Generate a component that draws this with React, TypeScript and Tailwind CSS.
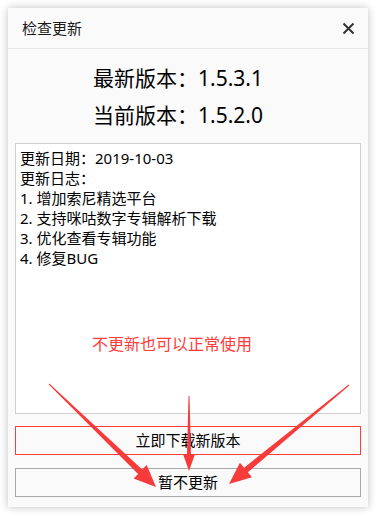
import React from "react";

function arrowPoints(tx: number, ty: number, hx: number, hy: number, headLen: number, headW: number, shaftW: number) {
  const dx = hx - tx;
  const dy = hy - ty;
  const len = Math.hypot(dx, dy);
  const ux = dx / len;
  const uy = dy / len;
  const nx = -uy;
  const ny = ux;
  const bx = hx - ux * headLen;
  const by = hy - uy * headLen;
  const pts: [number, number][] = [
    [tx + nx * 0.5, ty + ny * 0.5],
    [bx + nx * (shaftW / 2), by + ny * (shaftW / 2)],
    [bx + nx * (headW / 2), by + ny * (headW / 2)],
    [hx, hy],
    [bx - nx * (headW / 2), by - ny * (headW / 2)],
    [bx - nx * (shaftW / 2), by - ny * (shaftW / 2)],
    [tx - nx * 0.5, ty - ny * 0.5],
  ];
  return pts.map((p) => `${p[0].toFixed(1)},${p[1].toFixed(1)}`).join(" ");
}

const font = { fontFamily: '"Noto Sans", "Noto Sans CJK SC", sans-serif' };

export default function App() {
  const lines = [
    "更新日期：2019-10-03",
    "更新日志：",
    "1. 增加索尼精选平台",
    "2. 支持咪咕数字专辑解析下载",
    "3. 优化查看专辑功能",
    "4. 修复BUG",
  ];
  return (
    <div className="relative w-[376px] h-[516px] bg-white pt-2 pl-2" style={font}>
      <div className="w-[360px] h-[499px] bg-[#fafafa] shadow-[0_0_8px_rgba(0,0,0,0.25)] flex flex-col">
        <div className="h-[41px] flex items-center justify-between border-b border-[#e8e8e8] pl-[14px] pr-[13px]">
          <span className="text-[15px] text-[#1a1a1a]">检查更新</span>
          <svg width="13" height="13" viewBox="0 0 13 13">
            <path d="M1.5 1.5 L11.5 11.5 M11.5 1.5 L1.5 11.5" stroke="#333" strokeWidth="2" />
          </svg>
        </div>
        <div className="pt-[11px] pl-[85px] flex flex-col text-[21px] leading-[37px] text-black">
          <div>最新版本：1.5.3.1</div>
          <div>当前版本：1.5.2.0</div>
        </div>
        <div className="mx-[7px] mt-[9px] h-[271px] bg-white border border-[#cfcfcf] pt-[4px] pl-[4px] flex flex-col">
          {lines.map((l) => (
            <div key={l} className="text-[15px] leading-[20px] text-black">{l}</div>
          ))}
          <div className="mt-[66px] pl-[72px] text-[16px] leading-[20px] text-[#ff3a3a]">不更新也可以正常使用</div>
        </div>
        <button className="mx-[7px] mt-[12px] h-[29px] border border-[#ff3b3b] bg-[#fafafa] text-[15px] text-black flex items-center justify-center">
          立即下载新版本
        </button>
        <button className="mx-[7px] mt-[13px] h-[29px] border border-[#a8a8a8] bg-[#fafafa] text-[15px] text-black flex items-center justify-center">
          暂不更新
        </button>
      </div>
      <svg className="absolute left-0 top-0 pointer-events-none" width="376" height="516">
        <polygon points={arrowPoints(49, 384, 156, 487, 22, 19, 6)} fill="#f73b3b" />
        <polygon points={arrowPoints(189, 396, 189, 471, 17, 12, 4)} fill="#f73b3b" />
        <polygon points={arrowPoints(349, 385, 229, 484, 22, 19, 6)} fill="#f73b3b" />
      </svg>
    </div>
  );
}
